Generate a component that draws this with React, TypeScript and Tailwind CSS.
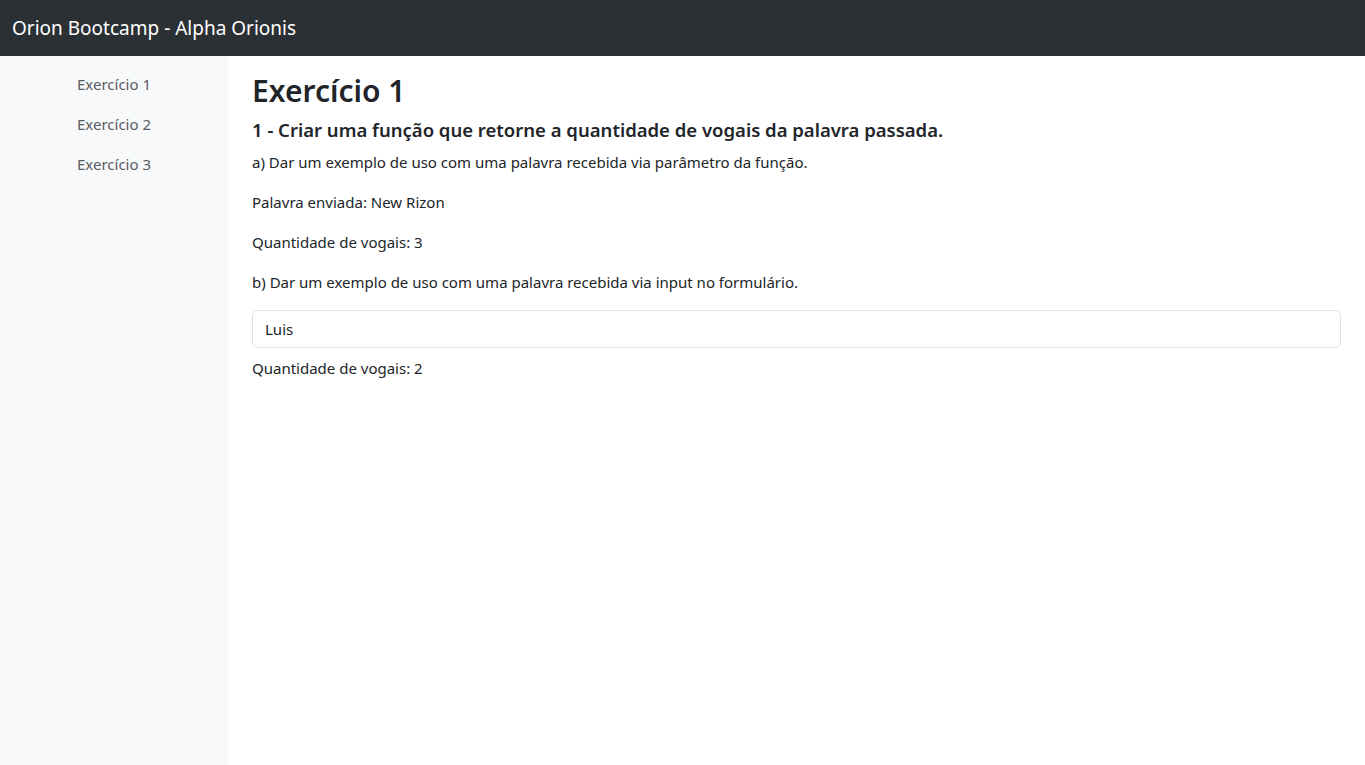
import React from "react";

export default function App() {
  return (
    <div className="min-h-[765px] flex flex-col bg-white text-[#212529]" style={{ fontFamily: '"Noto Sans", "Open Sans", sans-serif' }}>
      <nav className="h-14 bg-[#2b3035] flex items-center px-3 shrink-0">
        <span className="text-white text-[19px] leading-[30px]">Orion Bootcamp - Alpha Orionis</span>
      </nav>
      <div className="flex flex-1">
        <aside className="w-[228px] shrink-0 bg-[#f8f9fa] min-h-[709px] pt-2 flex flex-col items-center">
          {["Exercício 1", "Exercício 2", "Exercício 3"].map((t) => (
            <a key={t} className="block px-4 py-2 text-[15px] leading-6 text-[#595c5f]">{t}</a>
          ))}
        </aside>
        <main className="flex-1 px-6 pt-4">
          <h1 className="text-[30px] leading-[38px] font-semibold mb-2">Exercício 1</h1>
          <h5 className="text-[18.5px] leading-6 font-semibold mb-2">1 - Criar uma função que retorne a quantidade de vogais da palavra passada.</h5>
          <p className="text-[15px] leading-6 mb-4">a) Dar um exemplo de uso com uma palavra recebida via parâmetro da função.</p>
          <p className="text-[15px] leading-6 mb-4">Palavra enviada: New Rizon</p>
          <p className="text-[15px] leading-6 mb-4">Quantidade de vogais: 3</p>
          <p className="text-[15px] leading-6 mb-4">b) Dar um exemplo de uso com uma palavra recebida via input no formulário.</p>
          <input
            className="block w-full h-[38px] px-3 border border-[#dee2e6] rounded-md text-[15px] text-[#212529] outline-none mb-2"
            defaultValue="Luis"
          />
          <p className="text-[15px] leading-6">Quantidade de vogais: 2</p>
        </main>
      </div>
    </div>
  );
}
